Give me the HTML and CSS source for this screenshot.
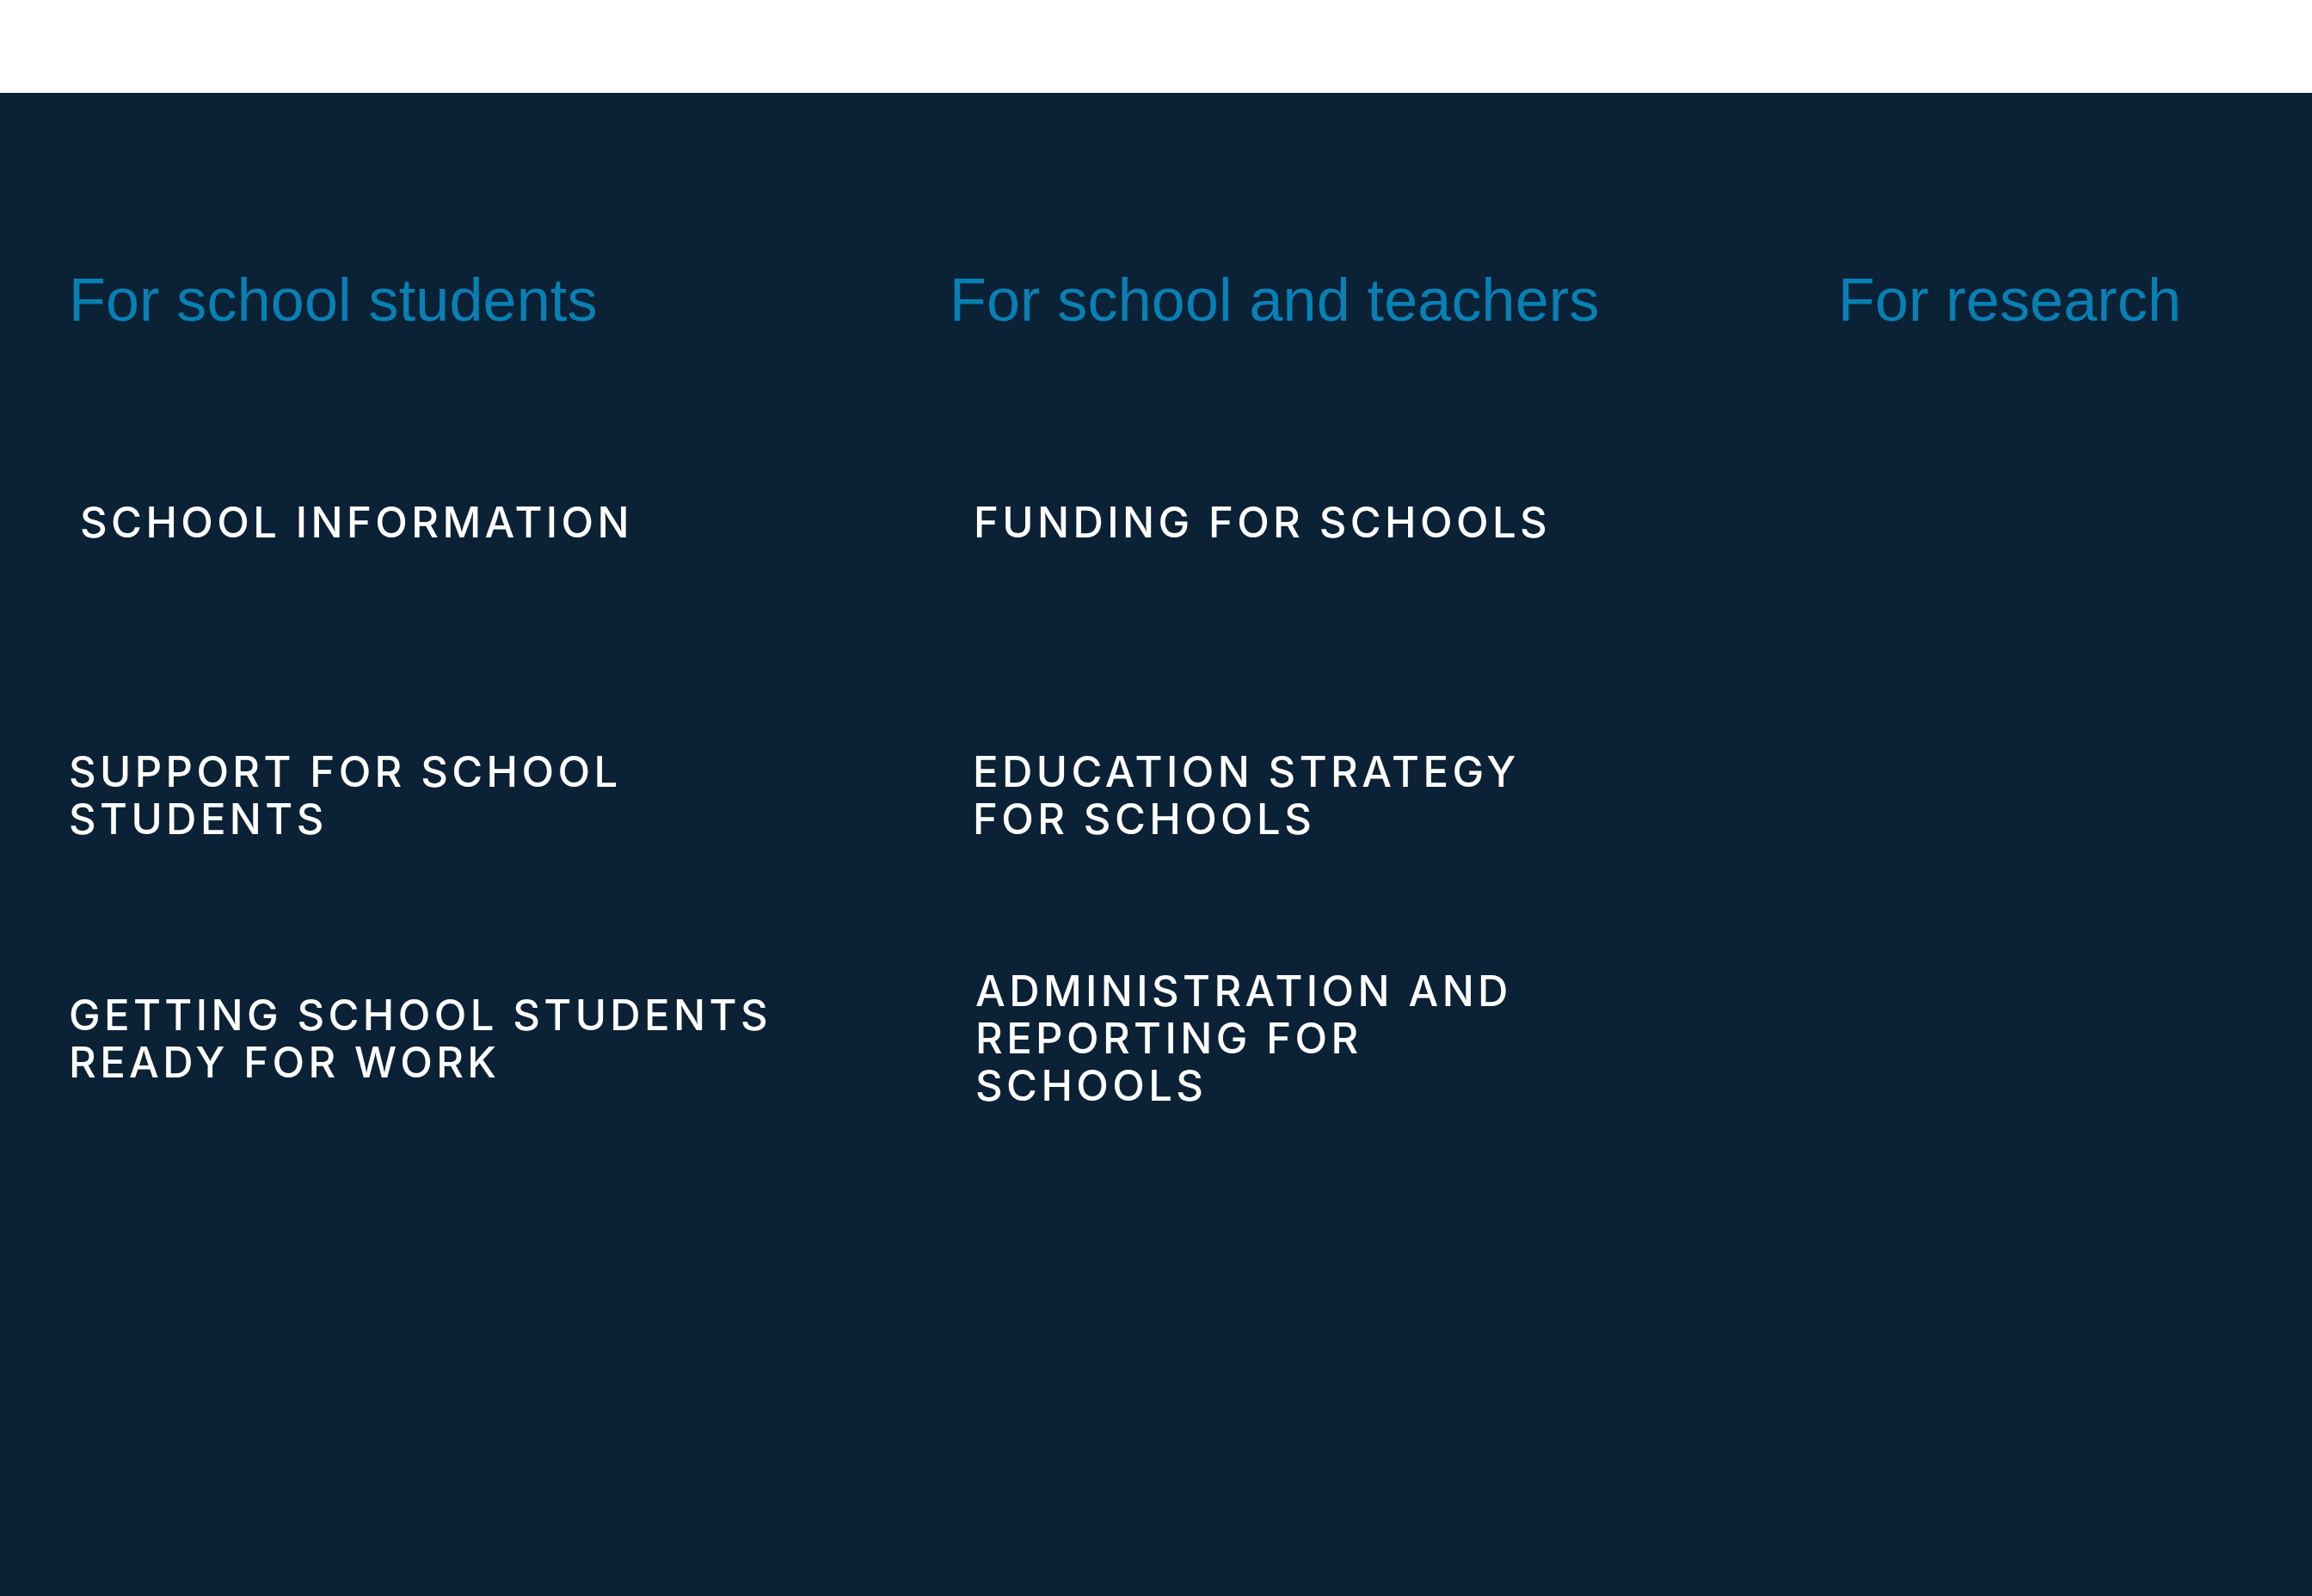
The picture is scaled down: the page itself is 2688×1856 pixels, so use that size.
FILE: index.html
```html
<!DOCTYPE html>
<html lang="en">
<head>
<meta charset="utf-8">
<title>Schools</title>
<link rel="stylesheet" href="styles.css">
</head>
<body>
<header class="topbar"></header>
<main class="panel">
  <div class="grid">
    <h2 class="heading">For school students</h2>
    <h2 class="heading">For school and teachers</h2>
    <h2 class="heading">For research</h2>

    <div class="cell"><a class="link link-first" href="#">School information</a></div>
    <div class="cell"><a class="link link-mid link-first-mid" href="#">Funding for schools</a></div>
    <div class="cell"></div>

    <div class="cell"><a class="link" href="#">Support for school students</a></div>
    <div class="cell"><a class="link link-mid" href="#">Education strategy for schools</a></div>
    <div class="cell"></div>

    <div class="cell"><a class="link" href="#">Getting school students ready for work</a></div>
    <div class="cell"><a class="link link-mid link-admin" href="#">Administration and reporting for schools</a></div>
    <div class="cell"></div>
  </div>
</main>
</body>
</html>
```

FILE: styles.css
```css
html, body {
  margin: 0;
  padding: 0;
}

body {
  background: #0b2135;
  font-family: "Liberation Sans", Arial, sans-serif;
  min-height: 1856px;
}

.topbar {
  height: 108px;
  background: #ffffff;
}

.panel {
  background: #0b2135;
  padding: 199px 0 0 80px;
  min-height: 1549px;
  box-sizing: border-box;
}

.grid {
  display: grid;
  grid-template-columns: 1024px 1033px 1fr;
  grid-template-rows: 125px 351px 283px 283px;
}

.heading {
  margin: 0;
  align-self: start;
  font-size: 70px;
  line-height: 84px;
  font-weight: 400;
  color: #0880b4;
  letter-spacing: 0.2px;
  white-space: nowrap;
}

.cell {
  display: flex;
  align-items: center;
}

.link {
  display: block;
  color: #ffffff;
  text-decoration: none;
  text-transform: uppercase;
  font-family: Inter, "Liberation Sans", Arial, sans-serif;
  font-weight: 500;
  font-size: 49px;
  line-height: 55px;
  letter-spacing: 4.4px;
  max-width: 880px;
}

.link-first {
  padding-left: 13px;
}

.link-mid {
  padding-left: 27px;
  max-width: 710px;
}

.link-first-mid {
  padding-left: 28px;
}

.link-admin {
  padding-left: 30px;
}
```
